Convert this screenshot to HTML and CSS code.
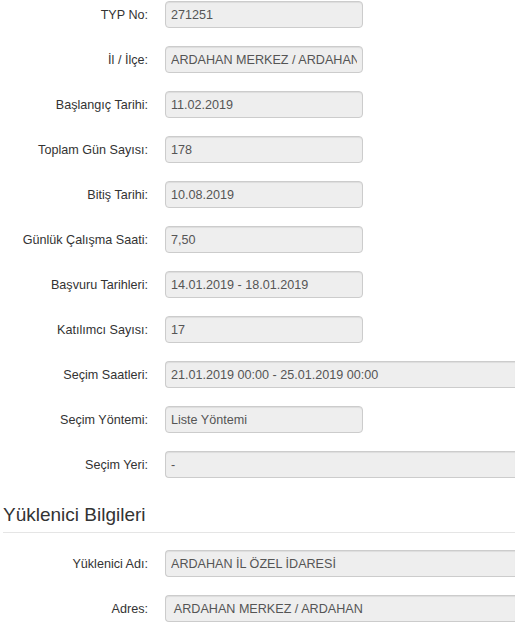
FILE: index.html
```html
<!DOCTYPE html>
<html lang="tr">
<head>
    <meta charset="UTF-8">
    <meta name="viewport" content="width=device-width, initial-scale=1.0">
    <title>Program Detayı</title>
    <link rel="stylesheet" href="styles.css">
</head>
<body>
    <div class="details">
        <div class="form-row">
            <label class="form-label">TYP No:</label>
            <input class="form-input" type="text" value="271251" readonly>
        </div>
        <div class="form-row">
            <label class="form-label">İl / İlçe:</label>
            <input class="form-input" type="text" value="ARDAHAN MERKEZ / ARDAHAN" readonly>
        </div>
        <div class="form-row">
            <label class="form-label">Başlangıç Tarihi:</label>
            <input class="form-input" type="text" value="11.02.2019" readonly>
        </div>
        <div class="form-row">
            <label class="form-label">Toplam Gün Sayısı:</label>
            <input class="form-input" type="text" value="178" readonly>
        </div>
        <div class="form-row">
            <label class="form-label">Bitiş Tarihi:</label>
            <input class="form-input" type="text" value="10.08.2019" readonly>
        </div>
        <div class="form-row">
            <label class="form-label">Günlük Çalışma Saati:</label>
            <input class="form-input" type="text" value="7,50" readonly>
        </div>
        <div class="form-row">
            <label class="form-label">Başvuru Tarihleri:</label>
            <input class="form-input" type="text" value="14.01.2019 - 18.01.2019" readonly>
        </div>
        <div class="form-row">
            <label class="form-label">Katılımcı Sayısı:</label>
            <input class="form-input" type="text" value="17" readonly>
        </div>
        <div class="form-row">
            <label class="form-label">Seçim Saatleri:</label>
            <input class="form-input wide" type="text" value="21.01.2019 00:00 - 25.01.2019 00:00" readonly>
        </div>
        <div class="form-row">
            <label class="form-label">Seçim Yöntemi:</label>
            <input class="form-input" type="text" value="Liste Yöntemi" readonly>
        </div>
        <div class="form-row">
            <label class="form-label">Seçim Yeri:</label>
            <input class="form-input wide" type="text" value="-" readonly>
        </div>

        <h4 class="section-title">Yüklenici Bilgileri</h4>

        <div class="form-row">
            <label class="form-label">Yüklenici Adı:</label>
            <input class="form-input wide" type="text" value="ARDAHAN İL ÖZEL İDARESİ" readonly>
        </div>
        <div class="form-row">
            <label class="form-label">Adres:</label>
            <input class="form-input wide" type="text" value=" ARDAHAN MERKEZ / ARDAHAN" readonly>
        </div>
    </div>
</body>
</html>
```

FILE: styles.css
```css
* {
    margin: 0;
    padding: 0;
    box-sizing: border-box;
}

body {
    background-color: #fff;
    color: #333;
    font-family: "Liberation Sans", Arial, Helvetica, sans-serif;
    font-size: 12.6px;
    overflow: hidden;
}

.details {
    padding-top: 1px;
}

.form-row {
    display: flex;
    align-items: center;
    gap: 17px;
    margin-bottom: 18px;
}

.form-label {
    flex: 0 0 148px;
    text-align: right;
    color: #333;
}

.form-input {
    flex: 0 0 198px;
    width: 198px;
    height: 27px;
    padding: 0 5px;
    font-family: inherit;
    font-size: 12.6px;
    color: #555;
    background-color: #eee;
    border: 1px solid #ccc;
    border-radius: 4px;
    box-shadow: inset 0 1px 1px rgba(0, 0, 0, 0.075);
    outline: none;
}

/* wide fields run off the right edge of the window */
.form-input.wide {
    flex: 0 0 350px;
    width: 350px;
    border-right: none;
    border-radius: 4px 0 0 4px;
}

/* top margin collapses with the row's bottom margin */
.section-title {
    margin: 27px 0 17px 3px;
    padding-bottom: 7px;
    font-size: 19px;
    font-weight: normal;
    line-height: 20px;
    color: #333;
    border-bottom: 1px solid #e5e5e5;
}
```
